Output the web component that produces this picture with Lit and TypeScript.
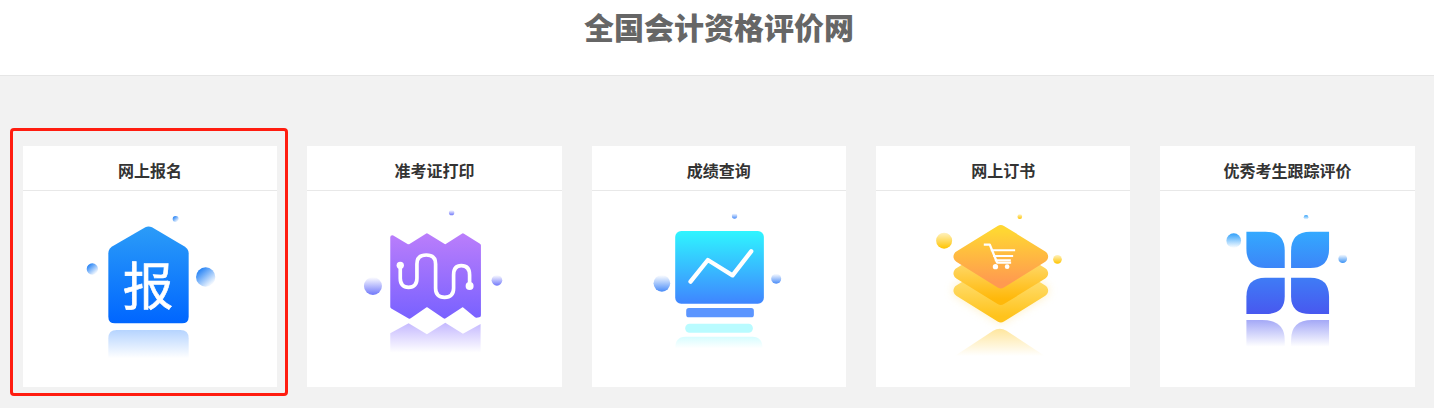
import { LitElement, html, css, svg } from "lit";
import { customElement } from "lit/decorators.js";

const bubble = (id: string, cx: number, cy: number, r: number) =>
  svg`<circle cx=${cx} cy=${cy} r=${r} fill="url(#${id})"></circle>`;

const stops = (a: string, b: string, aOp = 1, bOp = 1) => svg`
  <stop offset="0" stop-color=${a} stop-opacity=${aOp}></stop>
  <stop offset="1" stop-color=${b} stop-opacity=${bOp}></stop>`;

const icons = [
  svg`<svg class="icon" viewBox="165 240 570 510" width="190" height="170">
    <defs>
      <linearGradient id="a1" x1="0" y1="0" x2="0" y2="1">${stops("#2b9cf8", "#0066ff")}</linearGradient>
      <linearGradient id="a2" x1="0" y1="0" x2="0" y2="1">${stops("#0a70ff", "#0a70ff", 0.3, 0)}</linearGradient>
      <linearGradient id="a3" x1="0.15" y1="0.1" x2="0.85" y2="0.9">${stops("#1f7ff5", "#ffffff")}</linearGradient>
    </defs>
    ${bubble("a3", 527, 297, 9)}${bubble("a3", 277, 447, 17)}${bubble("a3", 617, 471, 29)}
    <path d="M436 322Q445 317 456 322L555 380Q566 388 566 400L566 590Q566 610 546 610L345 610Q325 610 325 590L325 400Q325 388 335 380Z" fill="url(#a1)"></path>
    <text x="444" y="554" text-anchor="middle" class="glyph">报</text>
    <path d="M350 630L541 630Q566 630 566 655L566 715L325 715L325 655Q325 630 350 630Z" fill="url(#a2)"></path>
  </svg>`,
  svg`<svg class="icon" viewBox="-1.8 0 570 510" width="190" height="170">
    <defs>
      <linearGradient id="b1" x1="0" y1="0" x2="0" y2="1">${stops("#b97dfb", "#7a62ff")}</linearGradient>
      <linearGradient id="b2" x1="0" y1="0" x2="0" y2="1">${stops("#8a72ff", "#8a72ff", 0.5, 0)}</linearGradient>
      <linearGradient id="b3" x1="0" y1="0" x2="0" y2="1">${stops("#ffffff", "#7078fa")}</linearGradient>
    </defs>
    ${bubble("b3", 336, 38, 8)}${bubble("b3", 100, 258, 27)}${bubble("b3", 472, 241, 16)}
    <path d="M158 112L207 141L262 106L317 140L370 106L418 136L418 346L410 347L370 314L315 350L262 314L210 350L158 320Z" fill="url(#b1)" stroke="url(#b1)" stroke-width="12" stroke-linejoin="round"></path>
    <path d="M182 196V235Q182 262 207 262Q232 262 232 235V192Q232 165 260 165Q288 165 288 192V265Q288 292 315 292Q342 292 342 265V225Q342 197 365 197Q390 197 390 225V258" fill="none" stroke="#fff" stroke-width="11"></path>
    <circle cx="182" cy="196" r="11" fill="#fff"></circle>
    <circle cx="390" cy="258" r="12" fill="#fff"></circle>
    <path d="M152 400L207 370L262 403L317 368L370 401L423 372V458H152Z" fill="url(#b2)"></path>
  </svg>`,
  svg`<svg class="icon" viewBox="-18.6 0 570 510" width="190" height="170">
    <defs>
      <linearGradient id="c1" x1="0" y1="0" x2="0" y2="1">${stops("#2ff5ff", "#3f85ff")}</linearGradient>
      <linearGradient id="c2" x1="0" y1="0" x2="0" y2="1">${stops("#b5fbff", "#b5fbff", 0.55, 0)}</linearGradient>
      <linearGradient id="c3" x1="0" y1="0" x2="0" y2="1">${stops("#ffffff", "#4a8cf8")}</linearGradient>
    </defs>
    ${bubble("c3", 313, 48, 8)}${bubble("c3", 95, 250, 25)}${bubble("c3", 438, 236, 15)}
    <rect x="135" y="93" width="266" height="218" rx="18" fill="url(#c1)"></rect>
    <path d="M181 245L233 180L307 226L363 154" fill="none" stroke="#fff" stroke-width="13" stroke-linecap="round" stroke-linejoin="round"></path>
    <rect x="168" y="324" width="203" height="28" rx="8" fill="#5b95ff"></rect>
    <rect x="165" y="371" width="203" height="27" rx="13" fill="#b9fbff"></rect>
    <path d="M165 410H367Q397 410 397 445H135Q135 410 165 410Z" fill="url(#c2)"></path>
  </svg>`,
  svg`<svg class="icon" viewBox="-5.4 0 570 510" width="190" height="170">
    <defs>
      <linearGradient id="d1" x1="0" y1="0" x2="0" y2="1">${stops("#ffd633", "#ff9a50")}</linearGradient>
      <linearGradient id="d2" x1="0" y1="0" x2="0" y2="1">${stops("#ffe690", "#ffb80a")}</linearGradient>
      <linearGradient id="d3" x1="0" y1="0" x2="0" y2="1">${stops("#ffe88f", "#ffc31c")}</linearGradient>
      <linearGradient id="d4" x1="0" y1="0" x2="0" y2="1">${stops("#ffcd3a", "#ffcd3a", 0.5, 0)}</linearGradient>
      <linearGradient id="d5" x1="0" y1="0" x2="0" y2="1">${stops("#fff2c0", "#ffc400")}</linearGradient>
      <filter id="d6" x="-30%" y="-30%" width="160%" height="160%"><feGaussianBlur stdDeviation="14"></feGaussianBlur></filter>
    </defs>
    <path d="M273 215L397 272L273 349L149 272Z" fill="#ffe9a8" stroke="#ffe9a8" stroke-width="36" stroke-linejoin="round" filter="url(#d6)" opacity="0.7"></path>
    ${bubble("d5", 330, 50, 7)}${bubble("d5", 103, 122, 24)}${bubble("d5", 443, 178, 13)}
    <path d="M273 195L397 272L273 349L149 272Z" fill="url(#d3)" stroke="url(#d3)" stroke-width="36" stroke-linejoin="round"></path>
    <path d="M273 143L397 220L273 297L149 220Z" fill="url(#d2)" stroke="url(#d2)" stroke-width="36" stroke-linejoin="round"></path>
    <path d="M273 93L397 170L273 247L149 170Z" fill="url(#d1)" stroke="url(#d1)" stroke-width="36" stroke-linejoin="round"></path>
    <path d="M222 134H240L262 188H304" fill="none" stroke="#fff" stroke-width="7" stroke-linejoin="round"></path>
    <path d="M243 151H316M250 168H310M255 181H303" fill="none" stroke="#fff" stroke-width="6"></path>
    <circle cx="257" cy="200" r="8" fill="#fff"></circle>
    <circle cx="292" cy="200" r="7" fill="#fff"></circle>
    <path d="M135 468L250 392Q270 380 290 392L405 468Z" fill="url(#d4)"></path>
  </svg>`,
  svg`<svg class="icon" viewBox="-7.2 0 570 510" width="190" height="170">
    <defs>
      <linearGradient id="e1" gradientUnits="userSpaceOnUse" x1="0" y1="95" x2="0" y2="342">${stops("#33a9ff", "#4858ef")}</linearGradient>
      <linearGradient id="e2" x1="0" y1="0" x2="0" y2="1">${stops("#5a62f0", "#5a62f0", 0.55, 0)}</linearGradient>
      <linearGradient id="e3" x1="0" y1="0" x2="0" y2="1">${stops("#30a0fa", "#ffffff")}</linearGradient>
      <linearGradient id="e4" x1="0" y1="0" x2="0" y2="1">${stops("#ffffff", "#3a92f5")}</linearGradient>
    </defs>
    ${bubble("e3", 332, 52, 7)}${bubble("e3", 115, 122, 22)}${bubble("e4", 442, 176, 13)}
    <g fill="url(#e1)">
      <path d="M153 95H210Q268 95 268 153V204H210Q153 204 153 146Z"></path>
      <path d="M401 95H345Q287 95 287 153V204H345Q401 204 401 146Z"></path>
      <path d="M268 233H210Q153 233 153 290V342H210Q268 342 268 290Z"></path>
      <path d="M287 233H345Q401 233 401 290V342H345Q287 342 287 290Z"></path>
    </g>
    <path d="M153 360H200Q268 360 268 420V440H153Z" fill="url(#e2)"></path>
    <path d="M401 360H350Q287 360 287 420V440H401Z" fill="url(#e2)"></path>
  </svg>`,
];

const titles = ["网上报名", "准考证打印", "成绩查询", "网上订书", "优秀考生跟踪评价"];

@customElement("app-root")
export class AppRoot extends LitElement {
  static styles = css`
    :host {
      display: block;
      position: relative;
      min-height: 408px;
      background: #f2f2f2;
      font-family: "Liberation Sans", "Noto Sans CJK SC", sans-serif;
      overflow: hidden;
    }
    .top {
      height: 66px;
      background: #fff;
      border-bottom: 1px solid #e6e6e6;
      display: flex;
      justify-content: center;
      padding: 9px 0 0 4px;
    }
    h1 {
      margin: 0;
      font-size: 30px;
      line-height: 40px;
      font-weight: 900;
      color: #666;
    }
    .cards {
      display: grid;
      grid-template-columns: repeat(5, 1fr);
      gap: 30px;
      padding: 70px 19.2px 0 22.8px;
    }
    .card {
      background: #fff;
      height: 241px;
    }
    .head {
      height: 45px;
      box-sizing: border-box;
      border-bottom: 1px solid #e8e8e8;
      display: flex;
      justify-content: center;
      align-items: center;
      padding-top: 4px;
      font-size: 16px;
      font-weight: 700;
      color: #333;
    }
    .body {
      display: flex;
      justify-content: center;
      padding-top: 9px;
    }
    .icon {
      display: block;
      flex: none;
    }
    .glyph {
      font-family: "Noto Sans CJK SC", sans-serif;
      font-size: 152px;
      fill: #fff;
      stroke: #fff;
      stroke-width: 2px;
    }
    .mark {
      position: absolute;
      left: 10px;
      top: 128px;
      width: 278px;
      height: 268px;
      box-sizing: border-box;
      border: 3px solid #ff1d10;
      border-radius: 4px;
      pointer-events: none;
    }
  `;

  render() {
    return html`
      <div class="top"><h1>全国会计资格评价网</h1></div>
      <div class="cards">
        ${titles.map(
          (t, i) => html`
            <div class="card">
              <div class="head">${t}</div>
              <div class="body">${icons[i]}</div>
            </div>
          `
        )}
      </div>
      <div class="mark"></div>
    `;
  }
}
